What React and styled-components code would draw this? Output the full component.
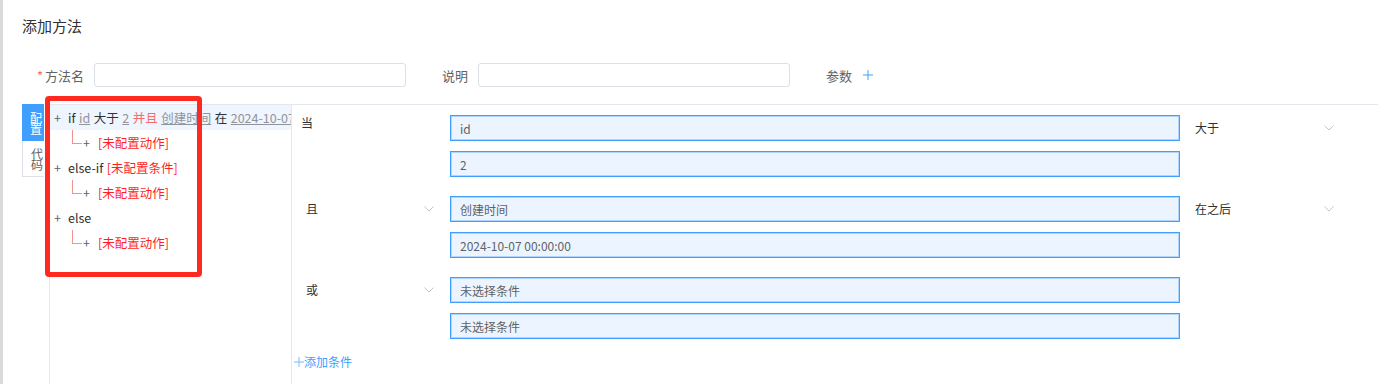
import React from 'react';
import styled, { createGlobalStyle } from 'styled-components';

const GlobalStyle = createGlobalStyle`
  html, body {
    margin: 0;
    padding: 0;
    background: #fff;
  }
  body {
    font-family: "Noto Sans CJK SC", "Noto Sans", sans-serif;
    color: #303133;
  }
`;

const Page = styled.div`
  position: relative;
  height: 384px;
  overflow: hidden;
  box-sizing: border-box;
  border-left: 3px solid #d9d9d9;
  display: flex;
  flex-direction: column;
`;

const Title = styled.div`
  padding: 16px 0 0 19px;
  font-size: 15px;
  line-height: 20px;
  color: #303133;
`;

const FormRow = styled.div`
  display: flex;
  align-items: center;
  height: 24px;
  margin-top: 27px;
  padding-left: 34px;
`;

const Field = styled.div`
  display: flex;
  align-items: center;
  margin-right: 36px;
`;

const Label = styled.span`
  font-size: 13px;
  color: #606266;
  margin-right: ${props => props.gap || 10}px;
  white-space: nowrap;
`;

const Star = styled.span`
  color: #f56c6c;
  margin-right: 2px;
`;

const TextInput = styled.div`
  width: 312px;
  height: 24px;
  box-sizing: border-box;
  border: 1px solid #dcdfe6;
  border-radius: 3px;
  background: #fff;
`;

const Editor = styled.div`
  flex: 1;
  display: flex;
  margin-top: 17px;
  padding-left: 19px;
  min-height: 0;
`;

const Tabs = styled.div`
  width: 22px;
  margin-right: 5px;
  display: flex;
  flex-direction: column;
`;

const Tab = styled.div`
  height: ${props => (props.active ? 37 : 36)}px;
  box-sizing: border-box;
  display: flex;
  flex-direction: column;
  justify-content: center;
  padding-left: 8px;
  font-size: 12px;
  line-height: 11px;
  background: ${props => (props.active ? '#409eff' : '#fff')};
  color: ${props => (props.active ? '#fff' : '#606266')};
  border: ${props => (props.active ? 'none' : '1px solid #dcdfe6')};
  border-top: none;
  border-right: none;
`;

const TreePanel = styled.div`
  width: 243px;
  flex-shrink: 0;
  box-sizing: border-box;
  border-top: 1px solid #e4e7ed;
  border-left: 1px solid #e4e7ed;
  border-right: 1px solid #e4e7ed;
  overflow: hidden;
`;

const TreeRow = styled.div`
  display: flex;
  align-items: center;
  height: 25px;
  padding-left: ${props => (props.sub ? 22 : 4)}px;
  font-size: 12.5px;
  white-space: nowrap;
  background: ${props => (props.active ? '#eef5fe' : 'transparent')};
`;

const Plus = styled.span`
  display: inline-block;
  width: ${props => props.w || 14}px;
  flex-shrink: 0;
  color: #606266;
`;

const Connector = styled.span`
  align-self: flex-start;
  width: 10px;
  height: 14px;
  flex-shrink: 0;
  margin-right: 1px;
  box-sizing: border-box;
  border-left: 1px solid #f39191;
  border-bottom: 1px solid #f39191;
`;

const Word = styled.span`
  margin-right: 3.5px;
  color: ${props => props.color || '#303133'};
  text-decoration: ${props => (props.link ? 'underline' : 'none')};
`;

const ConditionPanel = styled.div`
  flex: 1;
  border-top: 1px solid #e4e7ed;
  padding-top: 10px;
  display: flex;
  flex-direction: column;
`;

const Group = styled.div`
  display: grid;
  grid-template-columns: 158px 730px 170px;
  margin-bottom: 19px;
`;

const OpCell = styled.div`
  display: flex;
  align-items: ${props => (props.top ? 'flex-start' : 'center')};
  justify-content: space-between;
  height: ${props => (props.top ? 'auto' : '26px')};
  padding: ${props => (props.top ? '1px 0 0 9px' : '0 16px 0 14px')};
  font-size: 12px;
  line-height: 14px;
  color: #303133;
`;

const CompareCell = styled(OpCell)`
  padding: 0 16px 0 15px;
`;

const Inputs = styled.div`
  display: flex;
  flex-direction: column;
  gap: 10px;
`;

const ValueBox = styled.div`
  height: 26px;
  box-sizing: border-box;
  border: 1px solid #409eff;
  box-shadow: inset 0 0 0 1px rgba(64, 158, 255, 0.35);
  background: #ecf5ff;
  padding-left: 9px;
  display: flex;
  align-items: center;
  font-size: 12px;
  color: #606266;
`;

const AddCondition = styled.div`
  margin-top: -4px;
  padding-left: 2px;
  font-size: 12px;
  line-height: 16px;
  color: #409eff;
  display: flex;
  align-items: center;
`;

const Annotation = styled.div`
  position: absolute;
  left: 42px;
  top: 96px;
  width: 157px;
  height: 181px;
  box-sizing: border-box;
  border: 5px solid #ff2a1f;
  border-radius: 4px;
  pointer-events: none;
`;

const Chevron = () => (
  <svg width="10" height="6" viewBox="0 0 10 6">
    <path d="M0.5 0.5 L5 5 L9.5 0.5" fill="none" stroke="#c0c4cc" strokeWidth="1" />
  </svg>
);

const ThinPlus = ({ size = 10, color = '#409eff' }) => (
  <svg width={size} height={size} viewBox="0 0 10 10">
    <path d="M5 0 V10 M0 5 H10" stroke={color} strokeWidth="1" fill="none" />
  </svg>
);

const groups = [
  { op: '当', top: true, compare: '大于', values: ['id', '2'] },
  { op: '且', compare: '在之后', values: ['创建时间', '2024-10-07 00:00:00'] },
  { op: '或', values: ['未选择条件', '未选择条件'] },
];

function Action() {
  return (
    <TreeRow sub>
      <Connector />
      <Plus w={15}>+</Plus>
      <Word color="#ff1f1f">[未配置动作]</Word>
    </TreeRow>
  );
}

export default function App() {
  return (
    <>
      <GlobalStyle />
      <Page>
        <Title>添加方法</Title>
        <FormRow>
          <Field>
            <Label><Star>*</Star>方法名</Label>
            <TextInput />
          </Field>
          <Field>
            <Label>说明</Label>
            <TextInput />
          </Field>
          <Field>
            <Label gap={11}>参数</Label>
            <ThinPlus />
          </Field>
        </FormRow>
        <Editor>
          <Tabs>
            <Tab active><span>配</span><span>置</span></Tab>
            <Tab><span>代</span><span>码</span></Tab>
          </Tabs>
          <TreePanel>
            <TreeRow active>
              <Plus>+</Plus>
              <Word>if</Word>
              <Word link color="#909399">id</Word>
              <Word>大于</Word>
              <Word link color="#909399">2</Word>
              <Word color="#f56c6c">并且</Word>
              <Word link color="#909399">创建时间</Word>
              <Word>在</Word>
              <Word link color="#909399">2024-10-07 00:00:00</Word>
            </TreeRow>
            <Action />
            <TreeRow>
              <Plus>+</Plus>
              <Word>else-if</Word>
              <Word color="#ff1f1f">[未配置条件]</Word>
            </TreeRow>
            <Action />
            <TreeRow>
              <Plus>+</Plus>
              <Word>else</Word>
            </TreeRow>
            <Action />
          </TreePanel>
          <ConditionPanel>
            {groups.map((g, i) => (
              <Group key={i}>
                <OpCell top={g.top}>
                  <span>{g.op}</span>
                  {!g.top && <Chevron />}
                </OpCell>
                <Inputs>
                  {g.values.map((v, j) => (
                    <ValueBox key={j}>{v}</ValueBox>
                  ))}
                </Inputs>
                {g.compare ? (
                  <CompareCell>
                    <span>{g.compare}</span>
                    <Chevron />
                  </CompareCell>
                ) : (
                  <div />
                )}
              </Group>
            ))}
            <AddCondition>
              <ThinPlus size={10} color="#79bbff" />
              <span>添加条件</span>
            </AddCondition>
          </ConditionPanel>
        </Editor>
        <Annotation />
      </Page>
    </>
  );
}
